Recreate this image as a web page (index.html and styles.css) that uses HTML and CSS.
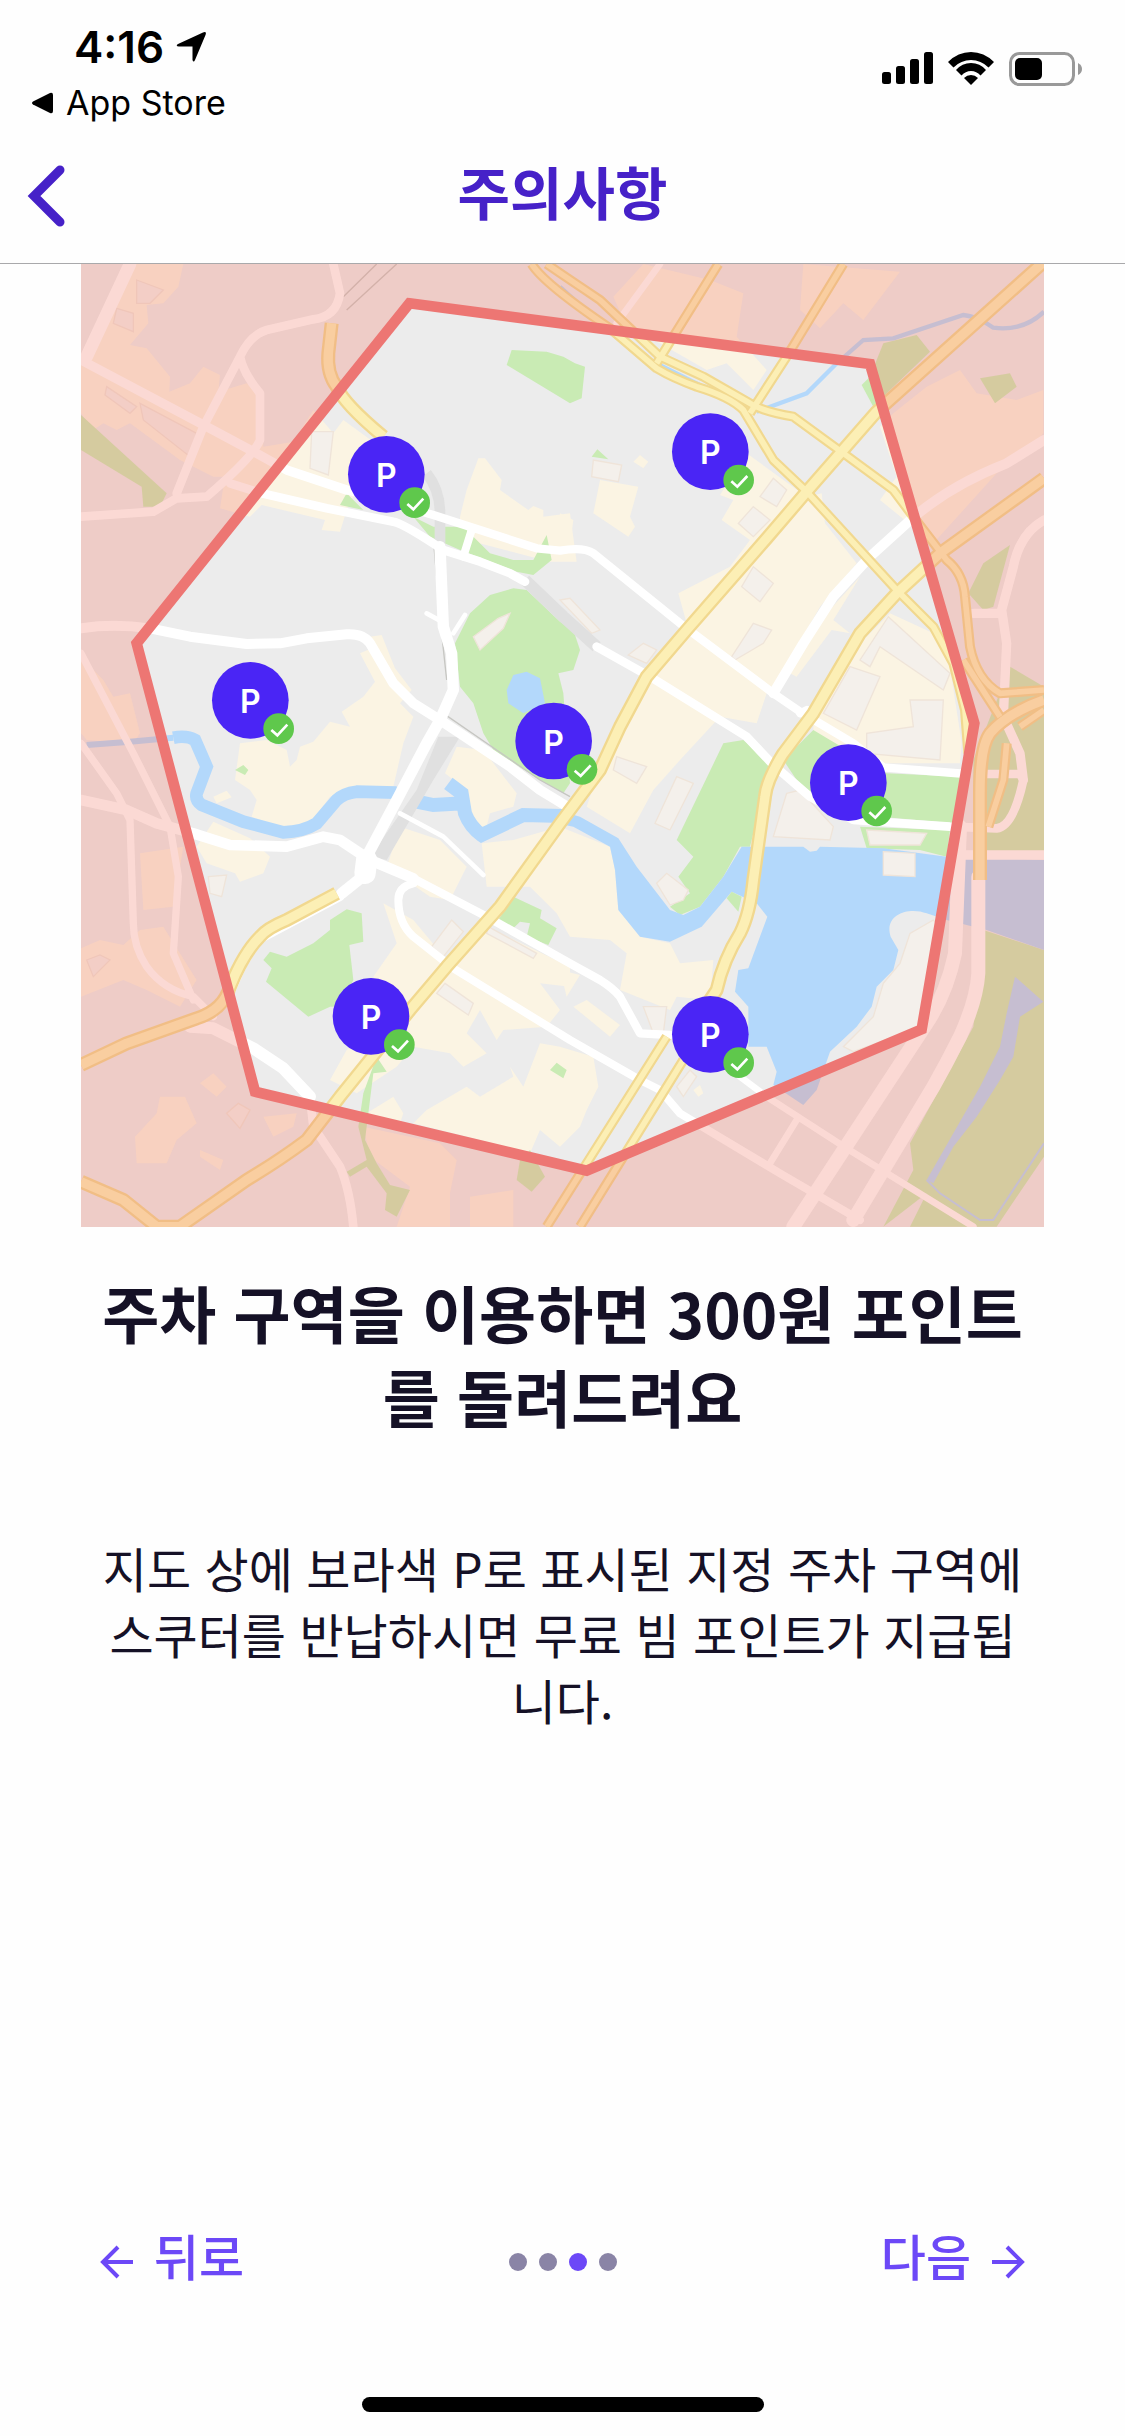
FILE: index.html
```html
<!DOCTYPE html>
<html lang="ko">
  <head>
    <meta charset="UTF-8" />
    <meta name="viewport" content="width=device-width, initial-scale=1.0" />
    <title>주의사항</title>
    <link rel="stylesheet" href="styles.css">
  </head>
  <body>
    <div class="status-bar">
      <div class="status-left">
        <div class="time">
          <span>4:16</span>
          <svg width="31" height="32" viewBox="0 0 31 32"><path d="M2 13 27 1.500Q31 0 29.500 4L19 29Q17.500 32 16.500 29V15.500H3Q-1 15 2 13Z" /></svg>
        </div>
        <button class="return-app">
          <svg width="21" height="22" viewBox="0 0 21 22"><path d="M1 9.500 18 1Q21 0 21 3V19Q21 22 18 21L1 12.500Q-1 11 1 9.500Z" /></svg>
          App Store
        </button>
      </div>
      <div class="status-icons">
        <svg width="51" height="32" viewBox="0 0 51 32">
          <rect x="0" y="20" width="9" height="12" rx="2.500" />
          <rect x="14" y="14" width="9" height="18" rx="2.500" />
          <rect x="28" y="7" width="9" height="25" rx="2.500" />
          <rect x="42" y="0" width="9" height="32" rx="2.500" />
        </svg>
        <svg width="46" height="33" viewBox="0 0 46 33">
          <path d="M0 10Q10 0 23 0T46 10L40.500 15.500Q33 8 23 8T5.500 15.500Z" />
          <path d="M8 18Q14 11 23 11T38 18L32.500 23.500Q28.500 19 23 19T13.500 23.500Z" />
          <path d="M16 26Q19 23 23 23T30 26L23 33Z" />
        </svg>
        <svg width="73" height="34" viewBox="0 0 73 34">
          <rect class="battery-case" x="1.500" y="1.500" width="63" height="31" rx="9" />
          <rect x="6" y="6" width="27" height="22" rx="5" />
          <path class="battery-cap" d="M69 11Q73 13 73 17T69 23Z" />
        </svg>
      </div>
    </div>

    <header class="header">
      <button class="header-back" aria-label="뒤로 가기">
        <svg width="40" height="64" viewBox="0 0 40 64"><path d="M34 6 8 32 34 58" /></svg>
      </button>
      <h1>주의사항</h1>
    </header>

    <main>
      <svg class="map" viewBox="3 12 2889 2889">
        <defs>
          <g id="pin">
            <circle class="pin-body" r="115" />
            <circle class="pin-badge" cx="85" cy="85" r="46" />
            <path class="pin-check" d="M63 89 81 105 111 73" />
          </g>
        </defs>

        <rect class="land" x="3" y="12" width="2889" height="2889" />

        <!-- city blocks -->
        <g class="block">
          <path d="M130 12 310 12 295 80 250 130 200 135 205 190 150 255 200 265 270 350 268 395 330 370 370 320 420 345 415 395 500 370 545 410 550 560 640 545 700 450 760 520 790 480 900 560 860 640 805 735 780 815 725 810 735 780 545 735 510 770 420 745 430 680 460 650 400 650 300 600 150 490 110 510 70 490 40 510 3 460 3 300 40 260Z" />
          <path d="M1140 770 1160 690 1195 595 1215 595 1265 660 1260 690 1345 750 1360 738 1390 750 1390 770 1470 760 1490 905 1410 905 1140 835Z" />
          <path d="M840 1180 875 1165 870 1130 905 1125 945 1225 995 1290 960 1330 1000 1370 970 1450 940 1580 830 1580 750 1610 690 1690 600 1700 515 1670 530 1620 510 1590 465 1560 480 1450 560 1440 620 1470 630 1520 650 1500 660 1460 700 1445 750 1385 810 1400 785 1355 850 1310 885 1265Z" />
          <path d="M3 1190 70 1260 100 1310 150 1300 180 1420 160 1450 20 1440 3 1420Z" />
          <path d="M400 1685 510 1735 570 1790 550 1840 480 1865 465 1840 380 1810 350 1760Z" />
          <path d="M400 1610 440 1592 455 1612 410 1630Z" />
          <path d="M180 1780 310 1760 280 1940 190 1950Z" />
          <path d="M3 2065 60 2040 130 2055 180 2010 250 2000 350 2160 300 2240 200 2190 130 2160 3 2210Z" />
          <path d="M1130 1460 1210 1470 1310 1600 1300 1640 1230 1660 1210 1740 1165 1640 1160 1590 1095 1540Z" />
          <path d="M960 1700 1080 1740 1160 1820 1110 1920 1050 1910 920 1820Z" />
          <path d="M1205 1750 1300 1740 1440 1700 1590 1760 1605 1830 1615 1950 1680 2030 1770 2050 1800 2110 1900 2100 1890 2220 1790 2210 1770 2250 1620 2190 1640 2080 1590 2040 1470 2030 1430 1960 1350 1880 1220 1880Z" />
          <path d="M910 1930 1000 1980 1100 2100 1220 2000 1470 2120 1470 2180 1380 2170 1440 2250 1400 2300 1270 2310 1250 2340 1200 2250 1160 2320 1220 2380 1150 2420 1110 2380 1000 2360 950 2420 830 2500 750 2460 800 2370 950 2250 880 2150 950 2050Z" />
          <path d="M1040 2550 1160 2480 1200 2510 1300 2450 1290 2420 1330 2480 1380 2350 1440 2360 1540 2390 1555 2480 1520 2550 1500 2600 1440 2660 1380 2610 1350 2680 1200 2640 1000 2590Z" />
          <path d="M860 2560 940 2510 970 2560 960 2590Z" />
          <path d="M850 2600 1080 2650 1130 2700 1110 2800 1110 2900 950 2900 990 2780 870 2690Z" />
          <path d="M1170 2810 1300 2790 1300 2900 1170 2900Z" />
          <path d="M165 2630 230 2560 240 2510 315 2510 350 2590 290 2640 260 2710 170 2710Z" />
          <path d="M360 2470 400 2440 440 2480 410 2510ZM550 2570 650 2560 640 2600 580 2630ZM360 2670 430 2700 420 2730 360 2690Z" />
          <path d="M1600 110 1690 12 1890 60 1990 100 1970 230 2060 330 2020 390 1940 310 1880 330 1740 250 1640 200Z" />
          <path d="M2170 12 2460 35 2350 180 2290 130 2220 205 2160 150Z" />
          <path d="M2400 500 2440 460 2540 380 2640 330 2690 400 2810 420 2890 390 2890 520 2820 600 2750 640 2560 850 2400 720 2450 650Z" />
          <path d="M2000 580 2180 710 2225 700 2235 790 2330 910 2220 1040 2100 1250 2060 1300 2030 1390 1920 1370 1800 1500 1720 1590 1650 1720 1520 1640 1600 1400 1720 1200 1820 1090 1795 1000 1950 920 2010 840 1925 780 1960 720 1920 705Z" />
          <path d="M2430 1060 2560 1120 2610 1220 2645 1450 2640 1510 2200 1510 2200 1370 2310 1180Z" />
          <path d="M2340 950 2260 1080 2310 1120 2255 1110 2150 1250 2130 1240 2230 1070Z" />
          <path d="M1560 660 1675 680 1650 770 1665 800 1645 830 1540 760Z" />
          <path d="M1440 760 1480 780 1475 820 1440 850ZM1680 585 1705 605 1690 625 1660 605Z" />
          <path d="M1480 2240 1520 2220 1620 2295 1590 2330ZM1440 2130 1500 2145 1460 2210ZM1840 2490 1860 2475 1870 2500 1855 2510Z" />
        </g>

        <!-- parks -->
        <g class="park">
          <path d="M1295 270 1400 275 1450 290 1485 310 1515 320 1505 415 1470 430 1280 315Z" />
          <path d="M1300 985 1340 990 1440 1085 1480 1110 1500 1170 1480 1230 1435 1240 1450 1300 1470 1570 1450 1600 1380 1560 1240 1470 1210 1420 1180 1330 1140 1280 1125 1150 1170 1060 1230 1005Z" />
          <path d="M1000 770 1060 800 1150 800 1230 880 1300 900 1360 900 1400 825 1415 900 1360 945 1310 935 1140 870 1050 830Z" />
          <path d="M780 735 800 700 850 750ZM1535 590 1552 568 1585 598Z" />
          <path d="M3 465 260 700 240 740 190 740 185 680 3 570Z" />
          <path d="M750 1980 800 1948 845 1960 850 2045 808 2055 820 2160 780 2240 750 2240 685 2270 558 2165 575 2125 550 2100 570 2075 620 2090 700 2050 750 2010Z" />
          <path d="M1300 1910 1385 1950 1380 1975 1430 2005 1405 2055 1340 2030 1350 1990 1320 1985 1300 2005 1255 1980Z" />
          <path d="M465 1530 490 1515 505 1530 495 1545ZM1410 2430 1430 2408 1460 2430 1450 2455Z" />
          <path d="M890 2390 920 2435 880 2440 865 2560 855 2640 890 2710 930 2775 990 2790 950 2870 915 2850 920 2800 860 2720 810 2750 800 2735 860 2700 835 2600 850 2500Z" />
          <path d="M1320 2700 1350 2670 1395 2750 1355 2795 1310 2760Z" />
          <path d="M2345 375 2370 350 2410 250 2510 225 2550 275 2430 390 2380 440Z" />
          <path d="M2700 355 2790 340 2810 380 2745 430ZM2665 1000 2710 910 2790 855 2740 1040 2710 1050Z" />
          <path d="M2790 1220 2892 1280 2892 1780 2740 1780 2680 1770 2680 1500Z" />
          <path d="M1930 1450 1990 1440 2080 1520 2040 1640 2010 1760 1980 1760 1930 1850 1860 1940 1800 1965 1770 1940 1830 1900 1795 1850 1840 1790 1790 1740Z" />
          <path d="M2110 1500 2200 1410 2250 1440 2420 1540 2640 1550 2620 1690 2400 1670 2190 1620Z" />
          <path d="M2340 1700 2610 1710 2600 1790 2520 1770 2360 1765Z" />
          <path d="M2710 2010 2892 2070 2892 2690 2750 2900 2490 2900 2540 2800 2410 2900 2500 2730 2490 2650 2680 2300Z" />
        </g>

        <!-- water -->
        <g class="water">
          <path d="M1280 1290 1300 1245 1340 1235 1380 1255 1395 1330 1330 1360 1285 1330Z" />
          <path d="M1985 1760 2170 1760 2190 1775 2210 1772 2220 1760 2410 1765 2600 1790 2892 1800 2892 2070 2720 2010 2600 1980 2540 1960C2490 1940 2410 1960 2432 2030L2455 2070 2440 2130 2390 2180 2375 2240 2330 2300 2250 2375 2210 2490 2170 2535 2080 2475 2090 2435 2060 2360 2005 2360 2005 2240 1965 2195 1975 2130 2005 2125 2062 1970 2030 1930 1955 1895 1865 2000 1770 2045 1680 2030 1615 1950 1605 1830 1590 1760 1480 1700 1430 1690 1430 1650 1500 1670 1615 1735 1670 1820 1770 1950 1810 1965 1860 1940 1930 1850Z" />
          <path d="M2805 2150 2890 2225 2820 2270 2800 2390 2760 2460 2690 2570 2620 2660 2560 2770 2540 2760 2620 2620 2700 2480 2760 2360 2780 2260Z" />
        </g>
        <g class="river">
          <path stroke-width="38" d="M950 1598 830 1595Q790 1600 770 1620L710 1690Q670 1715 610 1717L490 1685 365 1635Q345 1620 350 1600L380 1520 345 1440Q320 1425 280 1433" />
          <path stroke-width="18" d="M280 1433 150 1445 20 1455" />
          <path stroke-width="42" d="M1010 1625 1060 1635 1150 1630M1105 1570 1145 1600 1155 1660Q1170 1700 1205 1725L1330 1665 1450 1668" />
          <path stroke-width="13" d="M2030 455 2180 400 2265 315 2350 240 2440 235 2650 165Q2690 168 2740 203 2830 215 2892 155" />
          <path stroke-width="6" d="M2540 2760 2580 2800 2700 2880 2740 2880 2892 2650" />
          <path stroke-width="12" d="M1440 80 1540 170M1730 310 1990 440" />
        </g>

        <!-- park inside the bend of the river -->
        <path class="park" d="M1955 1895 1985 1910 1975 1955 1940 1915Z" />

        <!-- buildings -->
        <g class="building">
          <path d="M695 515 760 515 745 645 690 625Z" />
          <path d="M1180 1130 1255 1075 1290 1060 1270 1105 1200 1170Z" />
          <path d="M385 1850 440 1845 425 1910 390 1900Z" />
          <path d="M1055 2060 1115 1980 1150 2015 1090 2090ZM1225 2000 1370 2080 1360 2095 1220 2020ZM1095 2170 1180 2230 1165 2265 1070 2200Z" />
          <path d="M2080 655 2120 690 2090 740 2040 710ZM2020 740 2070 780 2020 830 1975 790ZM2020 920 2080 970 2040 1025 1985 980Z" />
          <path d="M2020 1090 2075 1110 2050 1150 1965 1200 1955 1190ZM1440 1020 1470 1015 1560 1110 1535 1120ZM1645 1185 1690 1150 1730 1170 1700 1210Z" />
          <path d="M2310 1220 2400 1250 2330 1410 2230 1360ZM2425 1070 2610 1240 2590 1290 2400 1160 2370 1220 2340 1200Z" />
          <path d="M2490 1320 2590 1320 2580 1500 2360 1480 2360 1420 2500 1400Z" />
          <path d="M1790 1550 1840 1570 1770 1710 1725 1690ZM1610 1490 1700 1520 1670 1570 1600 1530ZM1730 1870 1760 1840 1825 1890 1810 1920 1770 1935Z" />
          <path d="M2120 1600 2160 1590 2260 1700 2250 1740 2080 1730ZM2360 1710 2540 1720 2520 1755 2370 1755Z" />
          <path d="M2410 1775 2505 1780 2505 1850 2410 1845ZM1690 2240 1760 2240 1750 2320 1720 2320Z" />
          <path d="M2290 2360 2380 2270 2410 2170 2460 2110 2490 2020 2560 1980 2580 2000 2525 2300 2320 2375Z" />
          <path d="M1540 600 1625 615 1615 665 1535 650ZM1790 2480 1830 2430 1850 2450 1810 2510Z" />
          <path d="M170 60 250 90 210 130 170 130ZM110 145 160 160 160 215 100 190ZM80 380 170 440 150 460 75 405ZM180 430 350 520 330 590 190 480ZM20 2100 60 2085 90 2100 40 2150ZM440 2560 475 2530 510 2550 480 2605Z" />
        </g>

        <!-- rail yards -->
        <path class="rail" d="M1040 640Q1080 690 1080 760V860" stroke-width="32" />
        <path class="rail" d="M1335 960 1450 1070 1550 1160" stroke-width="36" />
        <path class="rail-area" d="M1075 1430 1140 1430 1060 1560 920 1800 870 1790 1010 1590Z" />
        <path class="rail-line" d="M1062 860 1085 1120 1100 1260M1090 1360 1380 1560 1470 1610M860 1770 920 1650M790 110 890 12M800 150 950 12" />

        <!-- local roads -->
        <g class="road">
          <path stroke-width="28" d="M3 300 380 500 530 580 620 630 800 690" />
          <path stroke-width="25" d="M800 690 1060 765 1200 810 1370 865 1440 872Q1510 860 1540 880L1800 1090 2080 1300 2160 1355 2320 1450 2410 1522 2660 1542" />
          <path stroke-width="26" d="M450 670 545 700 740 745 940 785Q970 790 1090 870L1200 905 1290 940 1335 965" />
          <path stroke-width="26" d="M1550 1160 1710 1250 2000 1430 2080 1515 2190 1610 2320 1680 2610 1700 2750 1705Q2800 1700 2830 1560L2820 1542H2720" />
          <path stroke-width="24" d="M1175 810 1150 890M2160 1360 2180 1350" />
          <path stroke-width="34" d="M1080 860 1090 1100 1115 1180 1120 1290 1080 1380 1040 1450 940 1640 860 1790" />
          <path stroke-width="30" d="M3 1105Q100 1090 210 1105L330 1130 500 1152 600 1150 680 1135 800 1123Q850 1120 870 1150L940 1270 1000 1330 1080 1380 1290 1520 1380 1590 1470 1645" />
          <path stroke-width="14" d="M1040 1060 1095 1090M1155 1065 1120 1120M960 1660 1090 1730 1210 1845" />
          <path stroke-width="32" d="M3 1620 140 1650 230 1690 340 1720 450 1755 620 1760 730 1730 780 1740 870 1800 1000 1855" />
          <path stroke-width="25" d="M1000 1855 1220 1970 1470 2110 1560 2160Q1600 2185 1620 2210L1680 2320 1770 2325" />
          <path stroke-width="64" d="M860 1800 855 1840" />
          <path stroke-width="34" d="M860 1840 785 1900" />
          <path stroke-width="24" d="M1000 1870Q955 1880 955 1920 955 1990 1000 2030L1120 2125 1470 2340 1680 2460 1740 2490 1800 2560 1850 2590 2100 2740 2340 2880" />
          <path stroke-width="36" d="M330 2300 400 2305 520 2365 610 2425 690 2510" />
          <path stroke-width="26" d="M690 2510 700 2600 780 2720Q810 2790 820 2900M780 1910 620 1995 535 2040 490 2110 450 2200" />
          <path stroke-width="30" d="M2892 540 2780 610Q2600 680 2480 790L2370 890 2260 1010 2170 1150 2080 1300" />
          <path stroke-width="38" d="M150 12 20 290" />
          <path stroke-width="26" d="M760 12 780 100Q770 170 700 178L560 210Q510 225 480 290L370 500 290 700M480 290Q490 340 540 400V540Q520 590 380 710L290 715 220 755 3 770" />
          <path stroke-width="22" d="M3 1450 110 1600 150 1680 160 1990Q160 2060 200 2120 250 2190 340 2210L400 2270M3 1180 160 1480 270 1700 295 1850 280 2080 340 2220" />
          <path stroke-width="28" d="M2892 780Q2820 820 2800 920L2765 1050 2780 1150 2770 1370 2820 1480 2830 1560M2680 1060 2765 1060M2650 1785H2892" />
          <path stroke-width="42" d="M2640 1700 2625 2080Q2600 2200 2540 2290L2140 2900" />
          <path stroke-width="42" d="M2695 1850V2140Q2690 2220 2640 2330 2600 2410 2560 2480L2320 2880" />
          <path stroke-width="20" d="M1980 2450 2060 2510 2300 2665 2680 2900M2150 2580 2070 2710M1740 12 1610 190" />
        </g>

        <!-- highways: the casing is drawn first, then the fill on top -->
        <defs>
          <g id="highways-wide">
            <path d="M2892 5 2390 455 2180 695 2060 835 1820 1110 1700 1250 1620 1400 1560 1530 1440 1690 1260 1940 1100 2120 990 2250 780 2510 680 2640Q600 2700 500 2760L300 2900H230L130 2820 3 2765" />
            <path d="M2892 655 2580 880 2450 1000 2340 1120 2200 1360 2110 1480Q2060 1560 2055 1610L2020 1860Q2010 1960 1980 2020 1930 2100 1910 2190L1850 2280" />
            <path d="M755 190 745 280Q740 340 770 380 790 430 910 530" />
            <path d="M3 2415 140 2350 350 2275Q430 2250 450 2180 490 2080 540 2030 560 2005 620 1980L770 1900" />
            <path d="M2892 1320Q2780 1360 2730 1420 2700 1460 2700 1600V1860" />
          </g>
          <g id="highways-narrow">
            <path d="M1355 12Q1390 70 1590 205L1730 325Q1780 355 1850 380 1950 410 1990 450L2080 600 2180 695 2450 990 2560 1100 2620 1210 2655 1350 2665 1480" />
            <path d="M1400 12Q1470 60 1560 120L1740 290 1870 350 2010 430Q2050 455 2140 470L2290 580 2440 690 2500 770 2600 900Q2650 940 2655 1010L2670 1160Q2690 1260 2760 1300L2892 1290" />
            <path d="M1915 12 1730 310M2290 12 2120 290 2010 460" />
            <path d="M1760 2330 1520 2710 1400 2900M1810 2400 1500 2900" />
            <path d="M2780 1450 2770 1560 2725 1700M2650 1200 2760 1370M2892 1350 2820 1400" />
          </g>
        </defs>
        <use class="casing wide" href="#highways-wide" />
        <use class="casing narrow" href="#highways-narrow" />
        <use class="fill wide" href="#highways-wide" />
        <use class="fill narrow" href="#highways-narrow" />

        <!-- service area: everything outside is shaded -->
        <path class="outside" fill-rule="evenodd" d="M3 12H2892V2901H3ZM988 130 2370 312 2683 1390 2525 2308 1520 2732 525 2495 170 1150Z" />
        <path class="boundary" d="M988 130 2370 312 2683 1390 2525 2308 1520 2732 525 2495 170 1150Z" />

        <g transform="translate(919 643)"><use href="#pin" /><text y="38">P</text></g>
        <g transform="translate(1891 575)"><use href="#pin" /><text y="38">P</text></g>
        <g transform="translate(511 1321)"><use href="#pin" /><text y="38">P</text></g>
        <g transform="translate(1421 1443)"><use href="#pin" /><text y="38">P</text></g>
        <g transform="translate(2305 1568)"><use href="#pin" /><text y="38">P</text></g>
        <g transform="translate(873 2269)"><use href="#pin" /><text y="38">P</text></g>
        <g transform="translate(1891 2323)"><use href="#pin" /><text y="38">P</text></g>
      </svg>

      <div class="notice">
        <h2>주차 구역을 이용하면 300원 포인트를 돌려드려요</h2>
        <p>지도 상에 보라색 P로 표시된 지정 주차 구역에 스쿠터를 반납하시면 무료 빔 포인트가 지급됩니다.</p>
      </div>
    </main>

    <footer class="pager">
      <button class="pager-button">
        <svg width="34" height="34" viewBox="0 0 34 34"><path d="M33 17H3M18 2 3 17 18 32" /></svg>
        뒤로
      </button>
      <div class="dots">
        <span class="dot"></span>
        <span class="dot"></span>
        <span class="dot active"></span>
        <span class="dot"></span>
      </div>
      <button class="pager-button next">
        다음
        <svg width="34" height="34" viewBox="0 0 34 34"><path d="M1 17H31M16 2 31 17 16 32" /></svg>
      </button>
    </footer>
    <div class="home-indicator"></div>
  </body>
</html>
```

FILE: styles.css
```css
body {
  margin: 0;
  min-height: 100vh;
  display: flex;
  flex-direction: column;
  background-color: #fefefe;
  color: #151126;
  font-family: "Noto Sans CJK KR", sans-serif;
}

button {
  display: flex;
  align-items: center;
  padding: 0;
  border: none;
  background: none;
  color: inherit;
  font: inherit;
  cursor: pointer;
}

/* status bar */
.status-bar {
  display: flex;
  justify-content: space-between;
  padding: 20px 43px 0 32px;
  color: black;
  font-family: Inter, sans-serif;
}

.status-left {
  display: flex;
  flex-direction: column;
  gap: 8px;
}

.time {
  display: flex;
  align-items: center;
  gap: 12px;
  padding-left: 42px;
  font-size: 44px;
  font-weight: 600;
  line-height: 54px;
}

.return-app {
  gap: 13px;
  font-size: 34px;
  line-height: 42px;
}

.status-icons {
  display: flex;
  align-items: flex-start;
  gap: 15px;
  padding-top: 32px;
}

.battery-case {
  fill: none;
  stroke: #999;
  stroke-width: 3;
}

.battery-cap {
  fill: #999;
}

/* header */
.header {
  display: grid;
  grid-template-columns: 1fr auto 1fr;
  align-items: center;
  height: 139px;
  padding: 0 26px;
  border-bottom: 1px solid #a9a9ab;
  color: #4621c8;
}

.header h1 {
  margin: 0 0 8px;
  font-size: 57px;
  font-weight: 700;
  line-height: 84px;
}

.header-back {
  justify-self: start;
  margin-top: 4px;
}

.header-back path {
  fill: none;
  stroke: #4621c8;
  stroke-width: 9;
  stroke-linecap: round;
}

/* map */
.map {
  display: block;
  width: calc(100% - 162px);
  margin: 0 auto;
}

.land {
  fill: #ececec;
}

.block {
  fill: #fbf4e3;
}

.park {
  fill: #c9ebb4;
}

.water {
  fill: #b3d8fb;
}

.river {
  fill: none;
  stroke: #b3d8fb;
}

.building {
  fill: #f4f0eb;
  stroke: #efe4d9;
  stroke-width: 4;
}

.rail {
  fill: none;
  stroke: #e0e0e0;
}

.rail-area {
  fill: #e0e0e0;
}

.rail-line {
  fill: none;
  stroke: #c6c6c2;
  stroke-width: 4;
}

.road {
  fill: none;
  stroke: white;
  stroke-linecap: round;
  stroke-linejoin: round;
}

.casing,
.fill {
  fill: none;
  stroke-linejoin: round;
}

.casing {
  stroke: #f1d88f;
}

.fill {
  stroke: #fcefb5;
}

.casing.wide {
  stroke-width: 42;
}

.fill.wide {
  stroke-width: 28;
}

.casing.narrow {
  stroke-width: 30;
}

.fill.narrow {
  stroke-width: 17;
}

.outside {
  fill: rgba(242, 130, 112, 0.3);
}

.boundary {
  fill: none;
  stroke: #ed7673;
  stroke-width: 32;
}

.pin-body {
  fill: #4a25f5;
}

.pin-badge {
  fill: #5fc84c;
}

.pin-check {
  fill: none;
  stroke: white;
  stroke-width: 8;
}

.map text {
  fill: white;
  font-family: Inter, sans-serif;
  font-size: 96px;
  font-weight: 600;
  text-anchor: middle;
}

/* notice */
.notice {
  padding: 43px 92px 0;
  text-align: center;
  word-break: break-all;
}

.notice h2 {
  margin: 0 0 96px;
  font-size: 62px;
  font-weight: 700;
  line-height: 84px;
}

.notice p {
  margin: 0;
  font-size: 48px;
  font-weight: 400;
  line-height: 66px;
}

/* pager */
.pager {
  display: grid;
  grid-template-columns: 1fr auto 1fr;
  align-items: center;
  margin-top: auto;
  padding: 0 100px;
  color: #6c48f7;
}

.pager-button {
  gap: 20px;
  font-size: 49px;
  font-weight: 500;
  line-height: 66px;
}

.pager-button.next {
  justify-self: end;
}

.pager-button svg {
  margin-top: 14px;
}

.pager-button path {
  fill: none;
  stroke: #6c48f7;
  stroke-width: 4;
}

.dots {
  display: flex;
  gap: 12px;
  margin-top: 14px;
}

.dot {
  width: 18px;
  height: 18px;
  border-radius: 50%;
  background-color: #8a84a6;
}

.dot.active {
  background-color: #6c48f7;
}

.home-indicator {
  width: 402px;
  height: 15px;
  margin: 109px auto 24px;
  border-radius: 8px;
  background-color: black;
}
```
